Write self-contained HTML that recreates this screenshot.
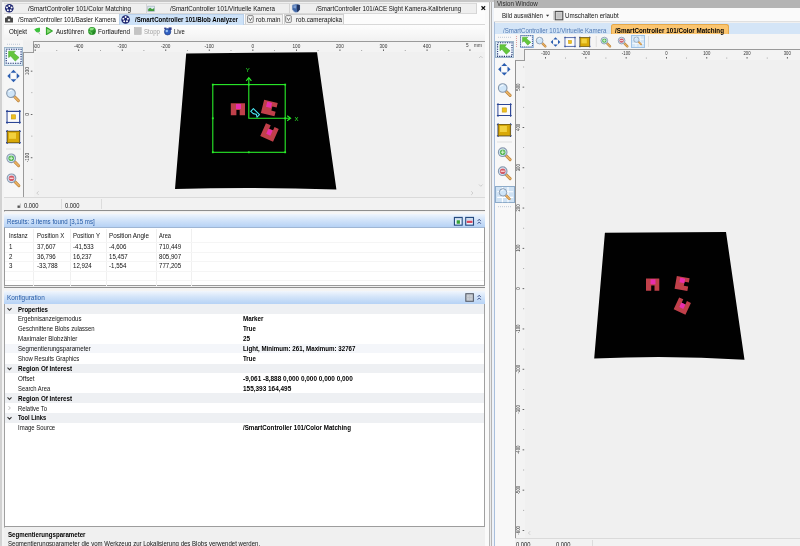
<!DOCTYPE html>
<html><head><meta charset="utf-8">
<style>
*{box-sizing:border-box;margin:0;padding:0}
html,body{width:800px;height:546px;overflow:hidden;background:#f0f0f0}
body{font-family:"Liberation Sans",sans-serif;font-size:6.5px;color:#111;position:relative}
.a{position:absolute}
.t{position:absolute;white-space:nowrap;line-height:10px;height:10px;transform-origin:0 50%}
.b{font-weight:bold;color:#000}
svg{position:absolute;left:0;top:0}
</style></head><body><div id="w" style="position:absolute;left:0;top:0;width:800px;height:546px;will-change:transform;opacity:0.999">
<div class="a" style="left:0px;top:0px;width:800px;height:2px;background:#c6c6c6;"></div>
<div class="a" style="left:0px;top:0px;width:1.5px;height:546px;background:#d2d2d2;"></div>
<div class="a" style="left:1.5px;top:2px;width:2.3px;height:544px;background:#f4f4f4;"></div>
<div class="a" style="left:3.8px;top:3px;width:0.9px;height:543px;background:#c4c4c4;"></div>
<div class="a" style="left:4px;top:3px;width:484px;height:10.5px;background:#efefef;border:1px solid #d9d9d9;border-left:none"></div>
<div class="a" style="left:145.5px;top:4px;width:1px;height:9px;background:#d5d5d5;"></div>
<div class="a" style="left:289px;top:4px;width:1px;height:9px;background:#d5d5d5;"></div>
<div class="a" style="left:476px;top:3px;width:12px;height:10.5px;background:#fdfdfd;border-left:1px solid #d5d5d5"></div>
<div class="a" style="left:4px;top:13.5px;width:484px;height:11px;background:#fcfcfc;border-bottom:1px solid #d8d8d8"></div>
<div class="a" style="left:119px;top:14px;width:125px;height:10.5px;background:#cde2f8;border:1px solid #b9d0ea;border-bottom:none"></div>
<div class="a" style="left:245px;top:14.3px;width:38px;height:10.2px;background:#f2f2f2;border:1px solid #cfcfcf;border-bottom:none"></div>
<div class="a" style="left:284.3px;top:14.3px;width:60px;height:10.2px;background:#f2f2f2;border:1px solid #cfcfcf;border-bottom:none"></div>
<div class="a" style="left:4px;top:24.5px;width:484px;height:17.5px;background:linear-gradient(#fdfdfd,#f6f6f6 60%,#f0f0f0);"></div>
<div class="a" style="left:4px;top:42px;width:484px;height:155px;background:#f0f0f0;"></div>
<div class="a" style="left:4px;top:40px;width:19px;height:157px;background:#f6f6f6;"></div>
<div class="a" style="left:4px;top:46.9px;width:18.7px;height:18.9px;background:#dcebf7;border:1px solid #9db5c9"></div>
<div class="a" style="left:32.8px;top:41.2px;width:452.2px;height:11px;background:#f3f3f3;border-top:1.5px solid #9a9a9a;border-left:1.1px solid #9a9a9a"></div>
<div class="a" style="left:23px;top:51.8px;width:10.9px;height:145px;background:#f3f3f3;border-top:1.4px solid #9a9a9a;border-left:1.5px solid #9a9a9a"></div>
<div class="a" style="left:4px;top:197px;width:484px;height:13.5px;background:#f2f2f2;border-top:1px solid #dadada"></div>
<div class="a" style="left:60.5px;top:199px;width:1px;height:10px;background:#dcdcdc;"></div>
<div class="a" style="left:101px;top:199px;width:1px;height:10px;background:#dcdcdc;"></div>
<div class="a" style="left:4px;top:210.3px;width:481px;height:1.2px;background:#8e8e8e;"></div>
<div class="a" style="left:4px;top:211.5px;width:481px;height:3.5px;background:#f6f6f6;"></div>
<div class="a" style="left:4px;top:214.3px;width:481px;height:13.2px;background:linear-gradient(#eef5fd,#d3e4f9 45%,#b6d2f5);"></div>
<div class="a" style="left:4px;top:227.3px;width:481px;height:59.2px;background:#fff;border:1px solid #9a9a9a;border-top-color:#9fb6d4"></div>
<div class="a" style="left:33px;top:228.5px;width:1px;height:57px;background:#f0f0f0;"></div>
<div class="a" style="left:69.5px;top:228.5px;width:1px;height:57px;background:#f0f0f0;"></div>
<div class="a" style="left:106px;top:228.5px;width:1px;height:57px;background:#f0f0f0;"></div>
<div class="a" style="left:155.5px;top:228.5px;width:1px;height:57px;background:#f0f0f0;"></div>
<div class="a" style="left:190.5px;top:228.5px;width:1px;height:57px;background:#f0f0f0;"></div>
<div class="a" style="left:5px;top:241.5px;width:479px;height:0.8px;background:#f5f5f5;"></div>
<div class="a" style="left:5px;top:251.5px;width:479px;height:0.8px;background:#f5f5f5;"></div>
<div class="a" style="left:5px;top:261px;width:479px;height:0.8px;background:#f5f5f5;"></div>
<div class="a" style="left:5px;top:270.5px;width:479px;height:0.8px;background:#f5f5f5;"></div>
<div class="a" style="left:5px;top:280px;width:479px;height:0.8px;background:#f5f5f5;"></div>
<div class="a" style="left:4px;top:286.5px;width:481px;height:1.2px;background:#8e8e8e;"></div>
<div class="a" style="left:4px;top:287.7px;width:481px;height:4.5px;background:#f4f4f4;"></div>
<div class="a" style="left:4px;top:291px;width:481px;height:13px;background:linear-gradient(#f1f6fd,#d3e4f9 45%,#b6d2f5);"></div>
<div class="a" style="left:4px;top:304.3px;width:481px;height:222px;background:#fff;border-left:1px solid #a0a0a0;border-right:1px solid #a0a0a0"></div>
<div class="a" style="left:5px;top:304.3px;width:479px;height:9.6px;background:#eef0f3;"></div>
<div class="a" style="left:5px;top:363.70000000000005px;width:479px;height:9.6px;background:#eef0f3;"></div>
<div class="a" style="left:5px;top:393.40000000000003px;width:479px;height:9.6px;background:#eef0f3;"></div>
<div class="a" style="left:5px;top:413.20000000000005px;width:479px;height:9.6px;background:#eef0f3;"></div>
<div class="a" style="left:5px;top:343.90000000000003px;width:479px;height:9.6px;background:#f4f6fa;"></div>
<div class="a" style="left:4px;top:526.3px;width:481px;height:1.2px;background:#9d9d9d;"></div>
<div class="a" style="left:4px;top:527.5px;width:481px;height:19px;background:#f0f0f0;"></div>
<div class="a" style="left:485px;top:3px;width:3.7px;height:543px;background:#fafafa;"></div>
<div class="a" style="left:489px;top:2px;width:1.1px;height:544px;background:#b8b8b8;"></div>
<div class="a" style="left:490.1px;top:2px;width:1.2px;height:544px;background:#ececec;"></div>
<div class="a" style="left:491.3px;top:2px;width:1.1px;height:544px;background:#b4b4b4;"></div>
<div class="a" style="left:492.4px;top:2px;width:2px;height:544px;background:#eef2f8;"></div>
<div class="a" style="left:494px;top:0px;width:1px;height:22px;background:#a8a8a8;"></div>
<div class="a" style="left:494.2px;top:22px;width:1px;height:524px;background:#a9bfdc;"></div>
<div class="a" style="left:494.5px;top:0px;width:306px;height:8.5px;background:#b4b4b4;"></div>
<div class="a" style="left:494px;top:8.3px;width:306px;height:14px;background:#fafafa;border-bottom:1px solid #e0e0e0"></div>
<div class="a" style="left:552.5px;top:10.5px;width:1px;height:9.5px;background:#d5d5d5;"></div>
<div class="a" style="left:494.5px;top:22.5px;width:306px;height:11.5px;background:#d4e5f7;"></div>
<div class="a" style="left:611px;top:24px;width:118px;height:10px;background:#fbc56f;border-radius:2.5px 2.5px 0 0;border:1px solid #e5a84a;border-bottom:none"></div>
<div class="a" style="left:495px;top:34px;width:305px;height:14.5px;background:#f5f5f5;"></div>
<div class="a" style="left:495px;top:34px;width:20px;height:512px;background:#f8f8f8;"></div>
<div class="a" style="left:519.5px;top:34.5px;width:14px;height:13.5px;background:#d3e6f7;border:1px solid #9fc3e6"></div>
<div class="a" style="left:631px;top:34.5px;width:14px;height:13.5px;background:#d3e6f7;border:1px solid #9fc3e6"></div>
<div class="a" style="left:495.3px;top:40.8px;width:19px;height:17.6px;background:#dcebf7;border:1px solid #9db5c9"></div>
<div class="a" style="left:495.3px;top:185.8px;width:19.7px;height:17.6px;background:#cfe2f4;border:1.5px solid #8dabc9"></div>
<div class="a" style="left:524px;top:49.2px;width:276px;height:11.3px;background:#f3f3f3;border-top:1.5px solid #9a9a9a;border-left:1.1px solid #9a9a9a"></div>
<div class="a" style="left:514.5px;top:59.6px;width:10.6px;height:478.7px;background:#f3f3f3;border-top:1.4px solid #9a9a9a;border-left:1.6px solid #929292"></div>
<div class="a" style="left:525px;top:60.5px;width:275px;height:476px;background:#f0f0f0;"></div>
<div class="a" style="left:515px;top:538.3px;width:285px;height:8px;background:#f2f2f2;border-top:1px solid #dadada"></div>
<div class="a" style="left:592px;top:540px;width:1px;height:6px;background:#dcdcdc;"></div>
<svg width="800" height="546" viewBox="0 0 800 546" font-family="Liberation Sans, sans-serif">
<path d="M186.2 53.6L317 52.2L336.4 189.4Q255 186.8 175 188.9Z" fill="#000"/>
<path d="M604.9 232.8L726 232L744.5 359.8Q669 355 594.2 358.6Z" fill="#000"/>
<clipPath id="c1"><rect x="33.8" y="42" width="451" height="10"/></clipPath><g clip-path="url(#c1)">
<rect x="34.7" y="49.4" width="0.9" height="1.6" fill="#555"/>
<rect x="56.4" y="50.0" width="0.8" height="0.9" fill="#888"/>
<text transform="translate(35.1,47.6) scale(0.82,1)" font-size="5.7" text-anchor="middle" fill="#333">-500</text>
<rect x="78.2" y="49.4" width="0.9" height="1.6" fill="#555"/>
<rect x="100.0" y="50.0" width="0.8" height="0.9" fill="#888"/>
<text transform="translate(78.6,47.6) scale(0.82,1)" font-size="5.7" text-anchor="middle" fill="#333">-400</text>
<rect x="121.8" y="49.4" width="0.9" height="1.6" fill="#555"/>
<rect x="143.5" y="50.0" width="0.8" height="0.9" fill="#888"/>
<text transform="translate(122.2,47.6) scale(0.82,1)" font-size="5.7" text-anchor="middle" fill="#333">-300</text>
<rect x="165.3" y="49.4" width="0.9" height="1.6" fill="#555"/>
<rect x="187.1" y="50.0" width="0.8" height="0.9" fill="#888"/>
<text transform="translate(165.7,47.6) scale(0.82,1)" font-size="5.7" text-anchor="middle" fill="#333">-200</text>
<rect x="208.8" y="49.4" width="0.9" height="1.6" fill="#555"/>
<rect x="230.6" y="50.0" width="0.8" height="0.9" fill="#888"/>
<text transform="translate(209.2,47.6) scale(0.82,1)" font-size="5.7" text-anchor="middle" fill="#333">-100</text>
<rect x="252.4" y="49.4" width="0.9" height="1.6" fill="#555"/>
<rect x="274.2" y="50.0" width="0.8" height="0.9" fill="#888"/>
<text transform="translate(252.8,47.6) scale(0.82,1)" font-size="5.7" text-anchor="middle" fill="#333">0</text>
<rect x="296.0" y="49.4" width="0.9" height="1.6" fill="#555"/>
<rect x="317.7" y="50.0" width="0.8" height="0.9" fill="#888"/>
<text transform="translate(296.4,47.6) scale(0.82,1)" font-size="5.7" text-anchor="middle" fill="#333">100</text>
<rect x="339.5" y="49.4" width="0.9" height="1.6" fill="#555"/>
<rect x="361.3" y="50.0" width="0.8" height="0.9" fill="#888"/>
<text transform="translate(339.9,47.6) scale(0.82,1)" font-size="5.7" text-anchor="middle" fill="#333">200</text>
<rect x="383.1" y="49.4" width="0.9" height="1.6" fill="#555"/>
<rect x="404.8" y="50.0" width="0.8" height="0.9" fill="#888"/>
<text transform="translate(383.4,47.6) scale(0.82,1)" font-size="5.7" text-anchor="middle" fill="#333">300</text>
<rect x="426.6" y="49.4" width="0.9" height="1.6" fill="#555"/>
<rect x="448.4" y="50.0" width="0.8" height="0.9" fill="#888"/>
<text transform="translate(427.0,47.6) scale(0.82,1)" font-size="5.7" text-anchor="middle" fill="#333">400</text>
<text transform="translate(467.3,47.3) scale(0.82,1)" font-size="5.7" text-anchor="middle" fill="#333">5</text><text transform="translate(478,47.3) scale(0.82,1)" font-size="5.7" text-anchor="middle" fill="#333">mm</text><rect x="469.5" y="49.3" width="0.9" height="1.6" fill="#555"/></g>
<clipPath id="c2"><rect x="525" y="50" width="275" height="11"/></clipPath><g clip-path="url(#c2)">
<rect x="545.1" y="57" width="0.9" height="1.6" fill="#555"/>
<rect x="565.2" y="57.6" width="0.8" height="0.9" fill="#888"/>
<text transform="translate(545.5,55.1) scale(0.82,1)" font-size="5.2" text-anchor="middle" fill="#333">-300</text>
<rect x="585.4" y="57" width="0.9" height="1.6" fill="#555"/>
<rect x="605.5" y="57.6" width="0.8" height="0.9" fill="#888"/>
<text transform="translate(585.8,55.1) scale(0.82,1)" font-size="5.2" text-anchor="middle" fill="#333">-200</text>
<rect x="625.7" y="57" width="0.9" height="1.6" fill="#555"/>
<rect x="645.9" y="57.6" width="0.8" height="0.9" fill="#888"/>
<text transform="translate(626.1,55.1) scale(0.82,1)" font-size="5.2" text-anchor="middle" fill="#333">-100</text>
<rect x="666.0" y="57" width="0.9" height="1.6" fill="#555"/>
<rect x="686.1" y="57.6" width="0.8" height="0.9" fill="#888"/>
<text transform="translate(666.4,55.1) scale(0.82,1)" font-size="5.2" text-anchor="middle" fill="#333">0</text>
<rect x="706.3" y="57" width="0.9" height="1.6" fill="#555"/>
<rect x="726.4" y="57.6" width="0.8" height="0.9" fill="#888"/>
<text transform="translate(706.7,55.1) scale(0.82,1)" font-size="5.2" text-anchor="middle" fill="#333">100</text>
<rect x="746.6" y="57" width="0.9" height="1.6" fill="#555"/>
<rect x="766.8" y="57.6" width="0.8" height="0.9" fill="#888"/>
<text transform="translate(747.0,55.1) scale(0.82,1)" font-size="5.2" text-anchor="middle" fill="#333">200</text>
<rect x="786.9" y="57" width="0.9" height="1.6" fill="#555"/>
<text transform="translate(787.3,55.1) scale(0.82,1)" font-size="5.2" text-anchor="middle" fill="#333">300</text>
</g>
<clipPath id="c3"><rect x="24" y="53" width="10" height="142"/></clipPath><g clip-path="url(#c3)">
<rect x="30.8" y="70.7" width="1.6" height="0.9" fill="#555"/>
<rect x="31.400000000000002" y="92.3" width="0.9" height="0.8" fill="#888"/>
<text transform="translate(29.3,71.1) rotate(-90) scale(0.82,1)" font-size="5.7" text-anchor="middle" fill="#333">100</text>
<rect x="30.8" y="114.0" width="1.6" height="0.9" fill="#555"/>
<rect x="31.400000000000002" y="135.7" width="0.9" height="0.8" fill="#888"/>
<text transform="translate(29.3,114.4) rotate(-90) scale(0.82,1)" font-size="5.7" text-anchor="middle" fill="#333">0</text>
<rect x="30.8" y="157.3" width="1.6" height="0.9" fill="#555"/>
<rect x="31.400000000000002" y="178.9" width="0.9" height="0.8" fill="#888"/>
<text transform="translate(29.3,157.7) rotate(-90) scale(0.82,1)" font-size="5.7" text-anchor="middle" fill="#333">-100</text>
</g>
<clipPath id="c4"><rect x="516" y="61" width="10" height="475"/></clipPath><g clip-path="url(#c4)">
<rect x="523.2" y="66.6" width="0.9" height="0.8" fill="#888"/>
<text transform="translate(520.2,46.8) rotate(-90) scale(0.82,1)" font-size="5.2" text-anchor="middle" fill="#333">600</text>
<rect x="522.6" y="86.7" width="1.6" height="0.9" fill="#555"/>
<rect x="523.2" y="106.9" width="0.9" height="0.8" fill="#888"/>
<text transform="translate(520.2,87.1) rotate(-90) scale(0.82,1)" font-size="5.2" text-anchor="middle" fill="#333">500</text>
<rect x="522.6" y="127.0" width="1.6" height="0.9" fill="#555"/>
<rect x="523.2" y="147.2" width="0.9" height="0.8" fill="#888"/>
<text transform="translate(520.2,127.4) rotate(-90) scale(0.82,1)" font-size="5.2" text-anchor="middle" fill="#333">400</text>
<rect x="522.6" y="167.3" width="1.6" height="0.9" fill="#555"/>
<rect x="523.2" y="187.5" width="0.9" height="0.8" fill="#888"/>
<text transform="translate(520.2,167.7) rotate(-90) scale(0.82,1)" font-size="5.2" text-anchor="middle" fill="#333">300</text>
<rect x="522.6" y="207.6" width="1.6" height="0.9" fill="#555"/>
<rect x="523.2" y="227.8" width="0.9" height="0.8" fill="#888"/>
<text transform="translate(520.2,208.0) rotate(-90) scale(0.82,1)" font-size="5.2" text-anchor="middle" fill="#333">200</text>
<rect x="522.6" y="247.9" width="1.6" height="0.9" fill="#555"/>
<rect x="523.2" y="268.1" width="0.9" height="0.8" fill="#888"/>
<text transform="translate(520.2,248.3) rotate(-90) scale(0.82,1)" font-size="5.2" text-anchor="middle" fill="#333">100</text>
<rect x="522.6" y="288.2" width="1.6" height="0.9" fill="#555"/>
<rect x="523.2" y="308.4" width="0.9" height="0.8" fill="#888"/>
<text transform="translate(520.2,288.6) rotate(-90) scale(0.82,1)" font-size="5.2" text-anchor="middle" fill="#333">0</text>
<rect x="522.6" y="328.5" width="1.6" height="0.9" fill="#555"/>
<rect x="523.2" y="348.7" width="0.9" height="0.8" fill="#888"/>
<text transform="translate(520.2,328.9) rotate(-90) scale(0.82,1)" font-size="5.2" text-anchor="middle" fill="#333">-100</text>
<rect x="522.6" y="368.8" width="1.6" height="0.9" fill="#555"/>
<rect x="523.2" y="389.0" width="0.9" height="0.8" fill="#888"/>
<text transform="translate(520.2,369.2) rotate(-90) scale(0.82,1)" font-size="5.2" text-anchor="middle" fill="#333">-200</text>
<rect x="522.6" y="409.1" width="1.6" height="0.9" fill="#555"/>
<rect x="523.2" y="429.2" width="0.9" height="0.8" fill="#888"/>
<text transform="translate(520.2,409.5) rotate(-90) scale(0.82,1)" font-size="5.2" text-anchor="middle" fill="#333">-300</text>
<rect x="522.6" y="449.4" width="1.6" height="0.9" fill="#555"/>
<rect x="523.2" y="469.6" width="0.9" height="0.8" fill="#888"/>
<text transform="translate(520.2,449.8) rotate(-90) scale(0.82,1)" font-size="5.2" text-anchor="middle" fill="#333">-400</text>
<rect x="522.6" y="489.7" width="1.6" height="0.9" fill="#555"/>
<rect x="523.2" y="509.9" width="0.9" height="0.8" fill="#888"/>
<text transform="translate(520.2,490.1) rotate(-90) scale(0.82,1)" font-size="5.2" text-anchor="middle" fill="#333">-500</text>
<rect x="522.6" y="530.0" width="1.6" height="0.9" fill="#555"/>
<text transform="translate(520.2,530.4) rotate(-90) scale(0.82,1)" font-size="5.2" text-anchor="middle" fill="#333">-600</text>
</g>
<g stroke="#2aee2a" stroke-width="1.1" fill="none"><rect x="212.8" y="84.6" width="72.4" height="67.7"/><path d="M248.8 78.2V118.3H290"/><path d="M246.2 80.8L248.8 77.6L251.4 80.8M287.2 115.8L290.6 118.3L287.2 120.8"/></g>
<g fill="#2aee2a"><rect x="211.9" y="83.69999999999999" width="1.8" height="1.8"/><rect x="247.9" y="83.69999999999999" width="1.8" height="1.8"/><rect x="284.3" y="83.69999999999999" width="1.8" height="1.8"/><rect x="211.9" y="117.39999999999999" width="1.8" height="1.8"/><rect x="284.3" y="117.39999999999999" width="1.8" height="1.8"/><rect x="211.9" y="151.4" width="1.8" height="1.8"/><rect x="247.9" y="151.4" width="1.8" height="1.8"/><rect x="284.3" y="151.4" width="1.8" height="1.8"/></g>
<text x="247.7" y="71.8" font-size="6" text-anchor="middle" fill="#2aee2a">Y</text><text x="296.4" y="120.6" font-size="6" text-anchor="middle" fill="#2aee2a">X</text>
<g><path d="M230.8 103.2h14.2v12h-5.3v-5.2h-3.3v5.2h-5.6z" fill="#c0404a"/><rect x="236" y="104" width="5" height="5" fill="#f02cc0" opacity="0.85"/><g transform="rotate(14 269.3 108)"><path d="M262.3 101.2h14v4.6h-4.4v4.2h4.4v4.8h-14z" fill="#c0404a"/><rect x="265.8" y="102.5" width="5" height="5" fill="#f02cc0" opacity="0.85"/></g><g transform="rotate(24 269.5 132.5)"><path d="M262.5 125.5h5.2v3.6h4.2v-3.6h4.6v14h-14z" fill="#c0404a"/><rect x="267" y="129.5" width="4.6" height="5.5" fill="#f02cc0" opacity="0.85"/></g></g>
<g stroke="#4ae6f2" stroke-width="1.1" fill="none" stroke-linejoin="round"><path d="M250.8 111.4L253.4 108.7L259.5 114.6L257 117.1L256.4 114.4L253.2 113.6Z"/></g>
<g><path d="M646 278.5h13.3v12.2h-4.8v-5.2h-3.3v5.2h-5.2z" fill="#c0404a"/><rect x="650.5" y="279.3" width="5" height="5" fill="#f02cc0" opacity="0.85"/><g transform="rotate(10 682 283.5)"><path d="M675.6 277h13v4.4h-4.4v4h4.4v4.6h-13z" fill="#c0404a"/><rect x="679.3" y="278.2" width="5" height="4.6" fill="#f02cc0" opacity="0.85"/></g><g transform="rotate(25 682.2 306)"><path d="M675.8 299.5h4.6v3.8h4v-3.8h4.4v13h-13z" fill="#c0404a"/><rect x="680" y="303.2" width="4.4" height="5" fill="#f02cc0" opacity="0.85"/></g></g>
<g transform="translate(9.3,8.3) scale(0.95)"><circle r="4.5" fill="#1c2470"/><circle cx="0.00" cy="-2.55" r="1.05" fill="#fff"/><circle cx="2.42" cy="-0.79" r="1.05" fill="#fff"/><circle cx="1.50" cy="2.07" r="1.05" fill="#fff"/><circle cx="-1.50" cy="2.07" r="1.05" fill="#fff"/><circle cx="-2.42" cy="-0.79" r="1.05" fill="#fff"/></g>
<g transform="translate(151.2,8.75) scale(1)"><rect x="-3.4" y="-2.6" width="6.8" height="5.2" fill="#dfeaf2" stroke="#9aa9b5" stroke-width="0.6"/><path d="M-3 2.3V0.3L-1 -1L1 0.5L3 -0.8V2.3Z" fill="#3f9a3a"/></g>
<g transform="translate(296,8) scale(1)"><path d="M-3.9 -3Q0 -4.8 3.9 -3V1.2Q2.4 4.2 0 4.6Q-2.4 4.2 -3.9 1.2Z" fill="#3f66a6" stroke="#c9d6ea" stroke-width="0.5"/><path d="M0.8 -3.6Q2.6 -3.6 3.9 -3V1.2Q3 3.2 1.2 4.2Z" fill="#22345f"/><path d="M-2.6 -2.4Q-1 -3 0.4 -2.8L0 0.4L-2.6 0Z" fill="#7f9fd2"/></g>
<g transform="translate(9,19.2) scale(0.95)"><path d="M-4.2 -1.6H-2.6L-1.8 -3.2H1.6L2.4 -1.6H4.2V3.4H-4.2Z" fill="#4a4a4a"/><circle cx="0" cy="0.9" r="1.7" fill="#e8e8e8" stroke="#2a2a2a" stroke-width="0.6"/></g>
<g transform="translate(125.6,19.4) scale(0.95)"><circle r="4.5" fill="#1c2470"/><circle cx="0.00" cy="-2.55" r="1.05" fill="#fff"/><circle cx="2.42" cy="-0.79" r="1.05" fill="#fff"/><circle cx="1.50" cy="2.07" r="1.05" fill="#fff"/><circle cx="-1.50" cy="2.07" r="1.05" fill="#fff"/><circle cx="-2.42" cy="-0.79" r="1.05" fill="#fff"/></g>
<g transform="translate(250.4,19) scale(0.92)"><rect x="-3" y="-3.6" width="6" height="7.2" rx="0.8" fill="#fff" stroke="#555" stroke-width="0.8"/><path d="M-1.6 -1.4L0 1.8L1.6 -1.4" stroke="#444" stroke-width="0.8" fill="none"/></g>
<g transform="translate(288.5,19) scale(0.92)"><rect x="-3" y="-3.6" width="6" height="7.2" rx="0.8" fill="#fff" stroke="#555" stroke-width="0.8"/><path d="M-1.6 -1.4L0 1.8L1.6 -1.4" stroke="#444" stroke-width="0.8" fill="none"/></g>
<g transform="translate(37.2,30.8) scale(1)"><path d="M-3 -1.2Q-0.5 -3.6 2.8 -3V0.6Q0.5 2.4 -1 1.2Z" fill="#3cc23c"/><path d="M1 1L2.8 3.6" stroke="#a8a8a8" stroke-width="0.8"/></g>
<g transform="translate(49.3,31) scale(1)"><path d="M-2.8 -3.4L3 0L-2.8 3.4Z" fill="#8ddc78" stroke="#33a82c" stroke-width="1.2" stroke-linejoin="round"/></g>
<g transform="translate(92,31) scale(1)"><circle r="3.9" fill="#2f9a2f"/><path d="M-2.6 -2.4Q0 -4 2.4 -2.6L0.6 -0.8L-1.8 -0.6Z" fill="#8be27e"/><path d="M-3.4 0.6L-1 1L-0.4 3.4" stroke="#7bd56f" stroke-width="0.8" fill="none"/><path d="M3.4 0.2L1.6 1.4L2 3" stroke="#1d6e1d" stroke-width="0.8" fill="none"/></g>
<g transform="translate(137.8,31) scale(1)"><rect x="-3.4" y="-3.4" width="6.8" height="6.8" fill="#c4c4c4" stroke="#b0b0b0" stroke-width="0.5"/></g>
<g transform="translate(168,31.2) scale(1)"><circle cx="-0.4" cy="0.6" r="3.2" fill="#2f5fc0" stroke="#1b3580" stroke-width="0.6"/><circle cx="-1.2" cy="-0.2" r="1.2" fill="#9cc2f2"/><path d="M0.6 -3.8H3.6V-1.2H0.6Z" fill="#31408f"/><path d="M-3.8 -3.6H-1.6V-2H-3.8Z" fill="#31408f"/></g>
<g transform="translate(13.65,56.3) scale(1)"><rect x="-7.4" y="-7" width="14.8" height="14" fill="#f4faff" stroke="#1b2a6b" stroke-width="1.1" stroke-dasharray="1.2 1.2"/><path d="M-5 -5.1L1.7 -5.1L0 -3.3L5.4 1.2L1.6 4.8L-3 -0.4L-5 1.2Z" fill="#63c63d" stroke="#4aa82c" stroke-width="0.6" stroke-linejoin="round"/></g>
<g transform="translate(13.5,76) scale(1)"><path d="M0 -6.2L2.9 -3.2H-2.9Z" fill="#2a5db0"/><path d="M0 6.2L2.9 3.2H-2.9Z" fill="#2a5db0"/><path d="M-6.2 0L-3.2 -2.9V2.9Z" fill="#2a5db0"/><path d="M6.2 0L3.2 -2.9V2.9Z" fill="#2a5db0"/><rect x="-2" y="-2" width="4" height="4" fill="#fff" opacity="0.7"/></g>
<g transform="translate(12.8,95) scale(1)"><path d="M1.8 1.8L5.6 5.6" stroke="#b9803a" stroke-width="2.9" stroke-linecap="round"/><path d="M1.8 1.8L5.6 5.6" stroke="#e9b163" stroke-width="1.7" stroke-linecap="round"/><circle cx="-1.8" cy="-1.8" r="4.3" fill="#cfe5f8" stroke="#8798ad" stroke-width="1.1"/><path d="M-4 -3A3 3 0 0 1 -1 -4.8" stroke="#fff" stroke-width="1" fill="none"/></g>
<g transform="translate(13.4,116.9) scale(1)"><path d="M-7.4 -5.5H7.4M-7.4 5.5H7.4M-6.3 -6.8V6.8M6.3 -6.8V6.8" stroke="#2b4596" stroke-width="1.15"/><rect x="-5.6" y="-4.8" width="11.2" height="9.6" fill="#fbfbfb"/><rect x="-2.1" y="-2.1" width="4.2" height="4.2" fill="#efc01c" stroke="#c79a12" stroke-width="0.6"/></g>
<g transform="translate(13.4,137) scale(1)"><path d="M-7.4 -5.6H7.4M-7.4 5.6H7.4M-6.2 -6.9V6.9M6.2 -6.9V6.9" stroke="#2b4596" stroke-width="1.1"/><rect x="-6" y="-5.6" width="12" height="11.2" fill="#d9a908" stroke="#86690a" stroke-width="0.9"/><rect x="-4.4" y="-4.2" width="7" height="6" fill="#f6d848" opacity="0.85"/></g>
<g transform="translate(13,160.1) scale(1)"><path d="M1.8 1.8L5.6 5.6" stroke="#b9803a" stroke-width="2.9" stroke-linecap="round"/><path d="M1.8 1.8L5.6 5.6" stroke="#e9b163" stroke-width="1.7" stroke-linecap="round"/><circle cx="-1.8" cy="-1.8" r="4.3" fill="#cfe5f8" stroke="#8798ad" stroke-width="1.1"/><path d="M-4 -3A3 3 0 0 1 -1 -4.8" stroke="#fff" stroke-width="1" fill="none"/><circle cx="-1.8" cy="-1.8" r="2.8" fill="#56b653"/><path d="M-3.6 -1.8H0M-1.8 -3.6V0" stroke="#d9f2d6" stroke-width="1"/></g>
<g transform="translate(13.3,180.1) scale(1)"><path d="M1.8 1.8L5.6 5.6" stroke="#b9803a" stroke-width="2.9" stroke-linecap="round"/><path d="M1.8 1.8L5.6 5.6" stroke="#e9b163" stroke-width="1.7" stroke-linecap="round"/><circle cx="-1.8" cy="-1.8" r="4.3" fill="#cfe5f8" stroke="#8798ad" stroke-width="1.1"/><path d="M-4 -3A3 3 0 0 1 -1 -4.8" stroke="#fff" stroke-width="1" fill="none"/><circle cx="-1.8" cy="-1.8" r="2.8" fill="#d35a66"/><path d="M-3.8 -1.8H0.2" stroke="#fbe3e5" stroke-width="1.2"/></g>
<path d="M7 44.3H20" stroke="#b8c4d4" stroke-width="0.9" stroke-dasharray="1 1"/><path d="M6 149H21" stroke="#d9d9d9" stroke-width="0.8"/>
<g transform="translate(458.3,221.3) scale(1.02)"><rect x="-3.8" y="-3.8" width="7.6" height="7.6" fill="#e9f3ff" stroke="#23497f" stroke-width="1.1"/><rect x="-1.6" y="-1" width="3.2" height="3.4" fill="#36a336"/><path d="M-3 -2.4H3" stroke="#8ea6c6" stroke-width="0.6"/></g>
<g transform="translate(469.6,221.3) scale(1.02)"><rect x="-3.8" y="-3.8" width="7.6" height="7.6" fill="#e9f3ff" stroke="#23497f" stroke-width="1.1"/><rect x="-2.8" y="-0.6" width="5.6" height="2.2" fill="#d9455a"/><path d="M-3 -2.2H3" stroke="#8ea6c6" stroke-width="0.6"/></g>
<g transform="translate(479.2,221.4) scale(0.9)"><path d="M-1.8 -0.4L0 -2.4L1.8 -0.4M-1.8 2.6L0 0.6L1.8 2.6" stroke="#263a78" stroke-width="0.9" fill="none"/></g>
<g transform="translate(469.6,297.5) scale(1.05)"><rect x="-3.6" y="-3.6" width="7.2" height="7.2" fill="#c9cdd3" stroke="#545a66" stroke-width="1"/><path d="M-3 0H3M0 -3V3" stroke="#b7bcc4" stroke-width="0.5"/></g>
<g transform="translate(479.2,297.4) scale(0.9)"><path d="M-1.8 -0.4L0 -2.4L1.8 -0.4M-1.8 2.6L0 0.6L1.8 2.6" stroke="#263a78" stroke-width="0.9" fill="none"/></g>
<g transform="translate(559,15.6) scale(1)"><rect x="-3.8" y="-4.2" width="7.6" height="8.4" fill="#d5d5d5" stroke="#4a4a4a" stroke-width="1.1"/><rect x="-2.4" y="-2.8" width="4.8" height="5.6" fill="#c4c4c4"/></g>
<path d="M546 14.8h3.2l-1.6 2z" fill="#333"/>
<g transform="translate(526.5,41.3) scale(0.8)"><rect x="-7.4" y="-7" width="14.8" height="14" fill="#f4faff" stroke="#1b2a6b" stroke-width="1.1" stroke-dasharray="1.2 1.2"/><path d="M-5 -5.1L1.7 -5.1L0 -3.3L5.4 1.2L1.6 4.8L-3 -0.4L-5 1.2Z" fill="#63c63d" stroke="#4aa82c" stroke-width="0.6" stroke-linejoin="round"/></g>
<g transform="translate(541,42) scale(0.78)"><path d="M1.8 1.8L5.6 5.6" stroke="#b9803a" stroke-width="2.9" stroke-linecap="round"/><path d="M1.8 1.8L5.6 5.6" stroke="#e9b163" stroke-width="1.7" stroke-linecap="round"/><circle cx="-1.8" cy="-1.8" r="4.3" fill="#cfe5f8" stroke="#8798ad" stroke-width="1.1"/><path d="M-4 -3A3 3 0 0 1 -1 -4.8" stroke="#fff" stroke-width="1" fill="none"/></g>
<g transform="translate(555.5,42) scale(0.78)"><path d="M0 -6.2L2.9 -3.2H-2.9Z" fill="#2a5db0"/><path d="M0 6.2L2.9 3.2H-2.9Z" fill="#2a5db0"/><path d="M-6.2 0L-3.2 -2.9V2.9Z" fill="#2a5db0"/><path d="M6.2 0L3.2 -2.9V2.9Z" fill="#2a5db0"/><rect x="-2" y="-2" width="4" height="4" fill="#fff" opacity="0.7"/></g>
<g transform="translate(570,42) scale(0.78)"><path d="M-7.4 -5.5H7.4M-7.4 5.5H7.4M-6.3 -6.8V6.8M6.3 -6.8V6.8" stroke="#2b4596" stroke-width="1.15"/><rect x="-5.6" y="-4.8" width="11.2" height="9.6" fill="#fbfbfb"/><rect x="-2.1" y="-2.1" width="4.2" height="4.2" fill="#efc01c" stroke="#c79a12" stroke-width="0.6"/></g>
<g transform="translate(584.8,42) scale(0.78)"><path d="M-7.4 -5.6H7.4M-7.4 5.6H7.4M-6.2 -6.9V6.9M6.2 -6.9V6.9" stroke="#2b4596" stroke-width="1.1"/><rect x="-6" y="-5.6" width="12" height="11.2" fill="#d9a908" stroke="#86690a" stroke-width="0.9"/><rect x="-4.4" y="-4.2" width="7" height="6" fill="#f6d848" opacity="0.85"/></g>
<g transform="translate(605.7,42) scale(0.78)"><path d="M1.8 1.8L5.6 5.6" stroke="#b9803a" stroke-width="2.9" stroke-linecap="round"/><path d="M1.8 1.8L5.6 5.6" stroke="#e9b163" stroke-width="1.7" stroke-linecap="round"/><circle cx="-1.8" cy="-1.8" r="4.3" fill="#cfe5f8" stroke="#8798ad" stroke-width="1.1"/><path d="M-4 -3A3 3 0 0 1 -1 -4.8" stroke="#fff" stroke-width="1" fill="none"/><circle cx="-1.8" cy="-1.8" r="2.8" fill="#56b653"/><path d="M-3.6 -1.8H0M-1.8 -3.6V0" stroke="#d9f2d6" stroke-width="1"/></g>
<g transform="translate(623,42) scale(0.78)"><path d="M1.8 1.8L5.6 5.6" stroke="#b9803a" stroke-width="2.9" stroke-linecap="round"/><path d="M1.8 1.8L5.6 5.6" stroke="#e9b163" stroke-width="1.7" stroke-linecap="round"/><circle cx="-1.8" cy="-1.8" r="4.3" fill="#cfe5f8" stroke="#8798ad" stroke-width="1.1"/><path d="M-4 -3A3 3 0 0 1 -1 -4.8" stroke="#fff" stroke-width="1" fill="none"/><circle cx="-1.8" cy="-1.8" r="2.8" fill="#d35a66"/><path d="M-3.8 -1.8H0.2" stroke="#fbe3e5" stroke-width="1.2"/></g>
<g transform="translate(638,41.3) scale(0.78)"><path d="M-7.4 -2.6H7.4M-7.4 2.6H7.4M-2.6 -7V7M2.6 -7V7" stroke="#fff" stroke-width="1"/></g><g transform="translate(637.532,40.831999999999994) scale(0.6240000000000001)"><path d="M1.8 1.8L5.6 5.6" stroke="#b9803a" stroke-width="2.9" stroke-linecap="round"/><path d="M1.8 1.8L5.6 5.6" stroke="#e9b163" stroke-width="1.7" stroke-linecap="round"/><circle cx="-1.8" cy="-1.8" r="4.3" fill="#cfe5f8" stroke="#8798ad" stroke-width="1.1"/><path d="M-4 -3A3 3 0 0 1 -1 -4.8" stroke="#fff" stroke-width="1" fill="none"/></g>
<path d="M516.5 36V47" stroke="#d58a8a" stroke-width="0.8" stroke-dasharray="1 1"/><path d="M596.3 36V47M648.5 36V47" stroke="#dcdcdc" stroke-width="0.8"/>
<g transform="translate(504.8,49.6) scale(0.97)"><rect x="-7.4" y="-7" width="14.8" height="14" fill="#f4faff" stroke="#1b2a6b" stroke-width="1.1" stroke-dasharray="1.2 1.2"/><path d="M-5 -5.1L1.7 -5.1L0 -3.3L5.4 1.2L1.6 4.8L-3 -0.4L-5 1.2Z" fill="#63c63d" stroke="#4aa82c" stroke-width="0.6" stroke-linejoin="round"/></g>
<g transform="translate(504.3,69.3) scale(1)"><path d="M0 -6.2L2.9 -3.2H-2.9Z" fill="#2a5db0"/><path d="M0 6.2L2.9 3.2H-2.9Z" fill="#2a5db0"/><path d="M-6.2 0L-3.2 -2.9V2.9Z" fill="#2a5db0"/><path d="M6.2 0L3.2 -2.9V2.9Z" fill="#2a5db0"/><rect x="-2" y="-2" width="4" height="4" fill="#fff" opacity="0.7"/></g>
<g transform="translate(504.5,89.8) scale(1)"><path d="M1.8 1.8L5.6 5.6" stroke="#b9803a" stroke-width="2.9" stroke-linecap="round"/><path d="M1.8 1.8L5.6 5.6" stroke="#e9b163" stroke-width="1.7" stroke-linecap="round"/><circle cx="-1.8" cy="-1.8" r="4.3" fill="#cfe5f8" stroke="#8798ad" stroke-width="1.1"/><path d="M-4 -3A3 3 0 0 1 -1 -4.8" stroke="#fff" stroke-width="1" fill="none"/></g>
<g transform="translate(504.3,110) scale(1)"><path d="M-7.4 -5.5H7.4M-7.4 5.5H7.4M-6.3 -6.8V6.8M6.3 -6.8V6.8" stroke="#2b4596" stroke-width="1.15"/><rect x="-5.6" y="-4.8" width="11.2" height="9.6" fill="#fbfbfb"/><rect x="-2.1" y="-2.1" width="4.2" height="4.2" fill="#efc01c" stroke="#c79a12" stroke-width="0.6"/></g>
<g transform="translate(504.3,130.2) scale(1)"><path d="M-7.4 -5.6H7.4M-7.4 5.6H7.4M-6.2 -6.9V6.9M6.2 -6.9V6.9" stroke="#2b4596" stroke-width="1.1"/><rect x="-6" y="-5.6" width="12" height="11.2" fill="#d9a908" stroke="#86690a" stroke-width="0.9"/><rect x="-4.4" y="-4.2" width="7" height="6" fill="#f6d848" opacity="0.85"/></g>
<g transform="translate(504.5,154) scale(1)"><path d="M1.8 1.8L5.6 5.6" stroke="#b9803a" stroke-width="2.9" stroke-linecap="round"/><path d="M1.8 1.8L5.6 5.6" stroke="#e9b163" stroke-width="1.7" stroke-linecap="round"/><circle cx="-1.8" cy="-1.8" r="4.3" fill="#cfe5f8" stroke="#8798ad" stroke-width="1.1"/><path d="M-4 -3A3 3 0 0 1 -1 -4.8" stroke="#fff" stroke-width="1" fill="none"/><circle cx="-1.8" cy="-1.8" r="2.8" fill="#56b653"/><path d="M-3.6 -1.8H0M-1.8 -3.6V0" stroke="#d9f2d6" stroke-width="1"/></g>
<g transform="translate(504.5,173) scale(1)"><path d="M1.8 1.8L5.6 5.6" stroke="#b9803a" stroke-width="2.9" stroke-linecap="round"/><path d="M1.8 1.8L5.6 5.6" stroke="#e9b163" stroke-width="1.7" stroke-linecap="round"/><circle cx="-1.8" cy="-1.8" r="4.3" fill="#cfe5f8" stroke="#8798ad" stroke-width="1.1"/><path d="M-4 -3A3 3 0 0 1 -1 -4.8" stroke="#fff" stroke-width="1" fill="none"/><circle cx="-1.8" cy="-1.8" r="2.8" fill="#d35a66"/><path d="M-3.8 -1.8H0.2" stroke="#fbe3e5" stroke-width="1.2"/></g>
<g transform="translate(505.2,194.6) scale(1.08)"><path d="M-7.4 -2.6H7.4M-7.4 2.6H7.4M-2.6 -7V7M2.6 -7V7" stroke="#fff" stroke-width="1"/></g><g transform="translate(504.55199999999996,193.952) scale(0.8640000000000001)"><path d="M1.8 1.8L5.6 5.6" stroke="#b9803a" stroke-width="2.9" stroke-linecap="round"/><path d="M1.8 1.8L5.6 5.6" stroke="#e9b163" stroke-width="1.7" stroke-linecap="round"/><circle cx="-1.8" cy="-1.8" r="4.3" fill="#cfe5f8" stroke="#8798ad" stroke-width="1.1"/><path d="M-4 -3A3 3 0 0 1 -1 -4.8" stroke="#fff" stroke-width="1" fill="none"/></g>
<path d="M498 37.3H511M498 206.7H511" stroke="#b8c4d4" stroke-width="0.9" stroke-dasharray="1 1"/><path d="M497 142H512" stroke="#d9d9d9" stroke-width="0.8"/>
<path d="M7.5 308.2l2 2.1 2-2.1" stroke="#333" stroke-width="1.05" fill="none"/>
<path d="M7.5 367.6l2 2.1 2-2.1" stroke="#333" stroke-width="1.05" fill="none"/>
<path d="M7.5 397.3l2 2.1 2-2.1" stroke="#333" stroke-width="1.05" fill="none"/>
<path d="M7.5 417.1l2 2.1 2-2.1" stroke="#333" stroke-width="1.05" fill="none"/>
<path d="M8.6 406.2l1.7 1.8-1.7 1.8" stroke="#999" stroke-width="0.7" fill="none"/>
<path d="M481.5 6.3l3.6 3.6M485.1 6.3l-3.6 3.6" stroke="#111" stroke-width="1.25"/>
<rect x="17.5" y="205.5" width="2.4" height="2.4" fill="#555"/><path d="M20.3 203.5v4.5" stroke="#999" stroke-width="0.6"/>
<g stroke="#c9c9c9" stroke-width="0.9" fill="none"><path d="M479 58l1.8-1.8 1.8 1.8M479 184.5l1.8 1.8 1.8-1.8M38.6 191.3l-1.8 1.8 1.8 1.8M471.2 191.3l1.8 1.8-1.8 1.8"/><path d="M530.2 531.2l-1.8 1.8 1.8 1.8"/></g>
</svg>
<!--ICONS-->
<div class="t" style="left:28.00px;top:4.00px;transform:scaleX(0.976);">/SmartController 101/Color Matching</div>
<div class="t" style="left:170.00px;top:4.00px;transform:scaleX(0.957);">/SmartController 101/Virtuelle Kamera</div>
<div class="t" style="left:316.00px;top:4.00px;transform:scaleX(0.947);">/SmartController 101/ACE Sight Kamera-Kalibrierung</div>
<div class="t" style="left:18.00px;top:15.00px;transform:scaleX(0.935);">/SmartController 101/Basler Kamera</div>
<div class="t b" style="left:135.00px;top:15.00px;transform:scaleX(0.946);">/SmartController 101/Blob Analyzer</div>
<div class="t" style="left:255.50px;top:15.00px;transform:scaleX(0.968);">rob.main</div>
<div class="t" style="left:296.00px;top:15.00px;transform:scaleX(0.957);">rob.camerapicka</div>
<div class="t" style="left:9.00px;top:27.00px;transform:scaleX(0.958);">Objekt</div>
<div class="t" style="left:55.50px;top:27.00px;transform:scaleX(0.945);">Ausführen</div>
<div class="t" style="left:97.50px;top:27.00px;transform:scaleX(0.973);">Fortlaufend</div>
<div class="t" style="left:143.50px;top:27.00px;transform:scaleX(0.941);color:#a0a0a0;">Stopp</div>
<div class="t" style="left:173.70px;top:27.00px;transform:scaleX(0.905);">Live</div>
<div class="t" style="left:24.30px;top:200.50px;transform:scaleX(0.891);">0.000</div>
<div class="t" style="left:64.50px;top:200.50px;transform:scaleX(0.891);">0.000</div>
<div class="t" style="left:6.75px;top:216.50px;transform:scaleX(0.945);color:#2158a6;">Results: 3 items found [3,15 ms]</div>
<div class="t" style="left:8.75px;top:230.50px;transform:scaleX(0.894);">Instanz</div>
<div class="t" style="left:36.75px;top:230.50px;transform:scaleX(0.931);">Position X</div>
<div class="t" style="left:73.00px;top:230.50px;transform:scaleX(0.926);">Position Y</div>
<div class="t" style="left:109.00px;top:230.50px;transform:scaleX(0.971);">Position Angle</div>
<div class="t" style="left:158.50px;top:230.50px;transform:scaleX(0.874);">Area</div>
<div class="t" style="left:8.75px;top:242.25px;transform:scaleX(0.941);">1</div>
<div class="t" style="left:36.75px;top:242.25px;transform:scaleX(0.941);">37,607</div>
<div class="t" style="left:73.00px;top:242.25px;transform:scaleX(0.941);">-41,533</div>
<div class="t" style="left:109.00px;top:242.25px;transform:scaleX(0.941);">-4,606</div>
<div class="t" style="left:158.50px;top:242.25px;transform:scaleX(0.941);">710,449</div>
<div class="t" style="left:8.75px;top:251.70px;transform:scaleX(0.941);">2</div>
<div class="t" style="left:36.75px;top:251.70px;transform:scaleX(0.941);">36,796</div>
<div class="t" style="left:73.00px;top:251.70px;transform:scaleX(0.941);">16,237</div>
<div class="t" style="left:109.00px;top:251.70px;transform:scaleX(0.941);">15,457</div>
<div class="t" style="left:158.50px;top:251.70px;transform:scaleX(0.941);">805,907</div>
<div class="t" style="left:8.75px;top:261.10px;transform:scaleX(0.941);">3</div>
<div class="t" style="left:36.75px;top:261.10px;transform:scaleX(0.941);">-33,788</div>
<div class="t" style="left:73.00px;top:261.10px;transform:scaleX(0.941);">12,924</div>
<div class="t" style="left:109.00px;top:261.10px;transform:scaleX(0.941);">-1,554</div>
<div class="t" style="left:158.50px;top:261.10px;transform:scaleX(0.941);">777,205</div>
<div class="t" style="left:6.75px;top:293.00px;transform:scaleX(0.985);color:#2158a6;">Konfiguration</div>
<div class="t b" style="left:17.80px;top:304.50px;transform:scaleX(0.933);">Properties</div>
<div class="t" style="left:17.80px;top:314.40px;transform:scaleX(0.934);">Ergebnisanzeigemodus</div>
<div class="t b" style="left:242.50px;top:314.40px;transform:scaleX(0.961);">Marker</div>
<div class="t" style="left:17.80px;top:324.30px;transform:scaleX(0.914);">Geschnittene Blobs zulassen</div>
<div class="t b" style="left:242.50px;top:324.30px;transform:scaleX(0.932);">True</div>
<div class="t" style="left:17.80px;top:334.20px;transform:scaleX(0.950);">Maximaler Blobzähler</div>
<div class="t b" style="left:242.50px;top:334.20px;transform:scaleX(0.981);">25</div>
<div class="t" style="left:17.80px;top:344.10px;transform:scaleX(0.946);">Segmentierungsparameter</div>
<div class="t b" style="left:242.50px;top:344.10px;transform:scaleX(0.949);">Light, Minimum: 261, Maximum: 32767</div>
<div class="t" style="left:17.80px;top:354.00px;transform:scaleX(0.906);">Show Results Graphics</div>
<div class="t b" style="left:242.50px;top:354.00px;transform:scaleX(0.932);">True</div>
<div class="t b" style="left:17.80px;top:363.90px;transform:scaleX(0.960);">Region Of Interest</div>
<div class="t" style="left:17.80px;top:373.80px;transform:scaleX(0.963);">Offset</div>
<div class="t b" style="left:242.50px;top:373.80px;transform:scaleX(0.989);">-9,061 -8,888 0,000 0,000 0,000 0,000</div>
<div class="t" style="left:17.80px;top:383.70px;transform:scaleX(0.900);">Search Area</div>
<div class="t b" style="left:242.50px;top:383.70px;transform:scaleX(0.988);">155,393 164,495</div>
<div class="t b" style="left:17.80px;top:393.60px;transform:scaleX(0.960);">Region Of Interest</div>
<div class="t" style="left:17.80px;top:403.50px;transform:scaleX(0.908);">Relative To</div>
<div class="t b" style="left:17.80px;top:413.40px;transform:scaleX(0.880);">Tool Links</div>
<div class="t" style="left:17.80px;top:423.30px;transform:scaleX(0.919);">Image Source</div>
<div class="t b" style="left:242.50px;top:423.30px;transform:scaleX(0.955);">/SmartController 101/Color Matching</div>
<div class="t b" style="left:7.50px;top:529.75px;transform:scaleX(0.941);">Segmentierungsparameter</div>
<div class="t" style="left:7.50px;top:538.50px;transform:scaleX(0.932);">Segmentierungsparameter die vom Werkzeug zur Lokalisierung des Blobs verwendet werden.</div>
<div class="t" style="left:497.00px;top:-0.60px;transform:scaleX(0.958);color:#2b2b2b;">Vision Window</div>
<div class="t" style="left:502.00px;top:11.10px;transform:scaleX(0.937);">Bild auswählen</div>
<div class="t" style="left:565.00px;top:11.10px;transform:scaleX(0.959);">Umschalten erlaubt</div>
<div class="t" style="left:502.50px;top:25.50px;transform:scaleX(0.943);color:#5079b3;">/SmartController 101/Virtuelle Kamera</div>
<div class="t b" style="left:615.00px;top:25.50px;transform:scaleX(0.964);">/SmartController 101/Color Matching</div>
<div class="t" style="left:515.50px;top:539.80px;transform:scaleX(0.891);">0.000</div>
<div class="t" style="left:555.50px;top:539.80px;transform:scaleX(0.891);">0.000</div>
</div></body></html>
